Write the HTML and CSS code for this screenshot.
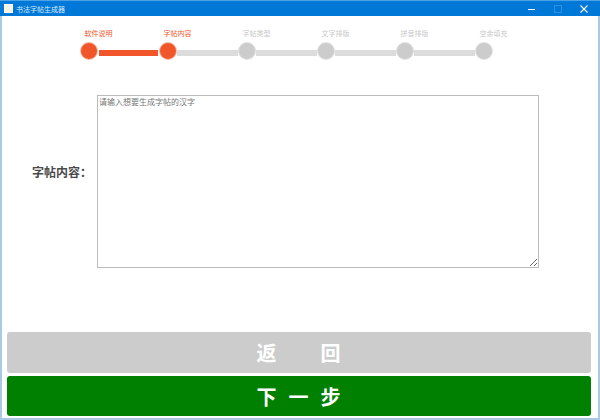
FILE: index.html
```html
<!DOCTYPE html>
<html lang="zh-CN">
<head>
    <meta charset="UTF-8">
    <meta name="viewport" content="width=device-width, initial-scale=1.0">
    <title>书法字帖生成器</title>
    <link rel="stylesheet" href="styles.css">
</head>
<body>
    <div class="window">
        <div class="titlebar">
            <div class="app-icon"></div>
            <div class="app-title">书法字帖生成器</div>
            <div class="controls">
                <svg class="ctrl" viewBox="0 0 10 10"><path d="M1 5.5H8" stroke="#fff" fill="none"/></svg>
                <svg class="ctrl ctrl-off" viewBox="0 0 10 10"><rect x="1.5" y="1.5" width="7" height="7" stroke="#2f90df" fill="none"/></svg>
                <svg class="ctrl" viewBox="0 0 10 10"><path d="M1.5 1.5L8.5 8.5M8.5 1.5L1.5 8.5" stroke="#fff" stroke-width="1.1" fill="none"/></svg>
            </div>
        </div>

        <div class="content">
            <div class="steps">
                <div class="step-labels">
                    <div class="step-label active">软件说明</div>
                    <div class="step-label active">字帖内容</div>
                    <div class="step-label">字帖类型</div>
                    <div class="step-label">文字排版</div>
                    <div class="step-label">拼音排版</div>
                    <div class="step-label">空余填充</div>
                </div>
                <div class="step-track">
                    <div class="dot active"></div>
                    <div class="bar active"></div>
                    <div class="dot active"></div>
                    <div class="bar"></div>
                    <div class="dot"></div>
                    <div class="bar"></div>
                    <div class="dot"></div>
                    <div class="bar"></div>
                    <div class="dot"></div>
                    <div class="bar"></div>
                    <div class="dot"></div>
                </div>
            </div>

            <div class="form-row">
                <label class="form-label" for="content">字帖内容：</label>
                <textarea id="content" class="form-input" placeholder="请输入想要生成字帖的汉字"></textarea>
            </div>

            <div class="buttons">
                <button class="btn btn-back">返　回</button>
                <button class="btn btn-next">下一步</button>
            </div>
        </div>
    </div>
</body>
</html>
```

FILE: styles.css
```css
html, body {
    margin: 0;
    padding: 0;
}
body {
    width: 600px;
    height: 420px;
    overflow: hidden;
    background: #fff;
    font-family: "Liberation Sans", "Noto Sans CJK SC", sans-serif;
}
.window {
    box-sizing: border-box;
    width: 600px;
    height: 420px;
    display: flex;
    flex-direction: column;
    border-left: 2px solid #a9c9e4;
    border-right: 2px solid #a9c9e4;
    border-bottom: 2px solid #a9c9e4;
}
.titlebar {
    display: flex;
    align-items: center;
    height: 16px;
    margin: 0 -2px;
    padding-left: 4px;
    background: #0078d7;
    border-top: 1px solid #4aa3e6;
    box-sizing: border-box;
}
.app-icon {
    width: 7px;
    height: 7px;
    background: #f7efe0;
    border: 1px solid #fff;
}
.app-title {
    margin-left: 3px;
    font-size: 7px;
    color: #d7e9f8;
}
.controls {
    display: flex;
    margin-left: auto;
    margin-right: 11px;
    gap: 16px;
}
.ctrl {
    display: block;
    width: 10px;
    height: 10px;
}
.content {
    flex: 1;
    display: flex;
    flex-direction: column;
}
.steps {
    margin: 14px 0 0 78px;
    width: 474px;
}
.step-labels {
    display: flex;
    margin-left: -21px;
}
.step-label {
    width: 79px;
    text-align: center;
    font-size: 7px;
    line-height: 8px;
    color: #c8c8c8;
}
.step-label.active {
    color: #f0562a;
}
.step-track {
    display: flex;
    align-items: center;
    margin-top: 4px;
}
.dot {
    flex: none;
    box-sizing: border-box;
    width: 18px;
    height: 18px;
    border-radius: 50%;
    background: #cccccc;
    border: 1px solid #e4e4e4;
}
.dot.active {
    background: #f0562a;
    border-color: #f9c3b2;
}
.bar {
    flex: none;
    width: 61px;
    height: 6px;
    margin-top: 4px;
    background: #dcdcdc;
}
.bar.active {
    width: 59px;
    margin-left: 1px;
    margin-right: 1px;
    background: #f0562a;
}
.form-row {
    display: flex;
    align-items: center;
    margin-top: 35px;
}
.form-label {
    width: 90px;
    margin-right: 5px;
    margin-bottom: 20px;
    text-align: right;
    font-size: 12px;
    font-weight: bold;
    color: #4a4a4a;
}
.form-input {
    box-sizing: border-box;
    display: block;
    width: 442px;
    height: 173px;
    margin: 0;
    padding: 2px 1px;
    border: 1px solid #bbbbbb;
    outline: none;
    font-family: inherit;
    font-size: 8px;
    line-height: 10px;
}
.form-input::placeholder {
    color: #777;
    opacity: 1;
}
.buttons {
    display: flex;
    flex-direction: column;
    gap: 3px;
    margin: 64px 7px 0 5px;
}
.btn {
    display: block;
    width: 100%;
    height: 41px;
    padding: 0 0 0 11px;
    border: none;
    border-radius: 3px;
    color: #fff;
    font-family: inherit;
    font-size: 20px;
    font-weight: bold;
    letter-spacing: 12px;
}
.btn-back {
    background: #cccccc;
}
.btn-next {
    height: 40px;
    background: #008000;
}
```
